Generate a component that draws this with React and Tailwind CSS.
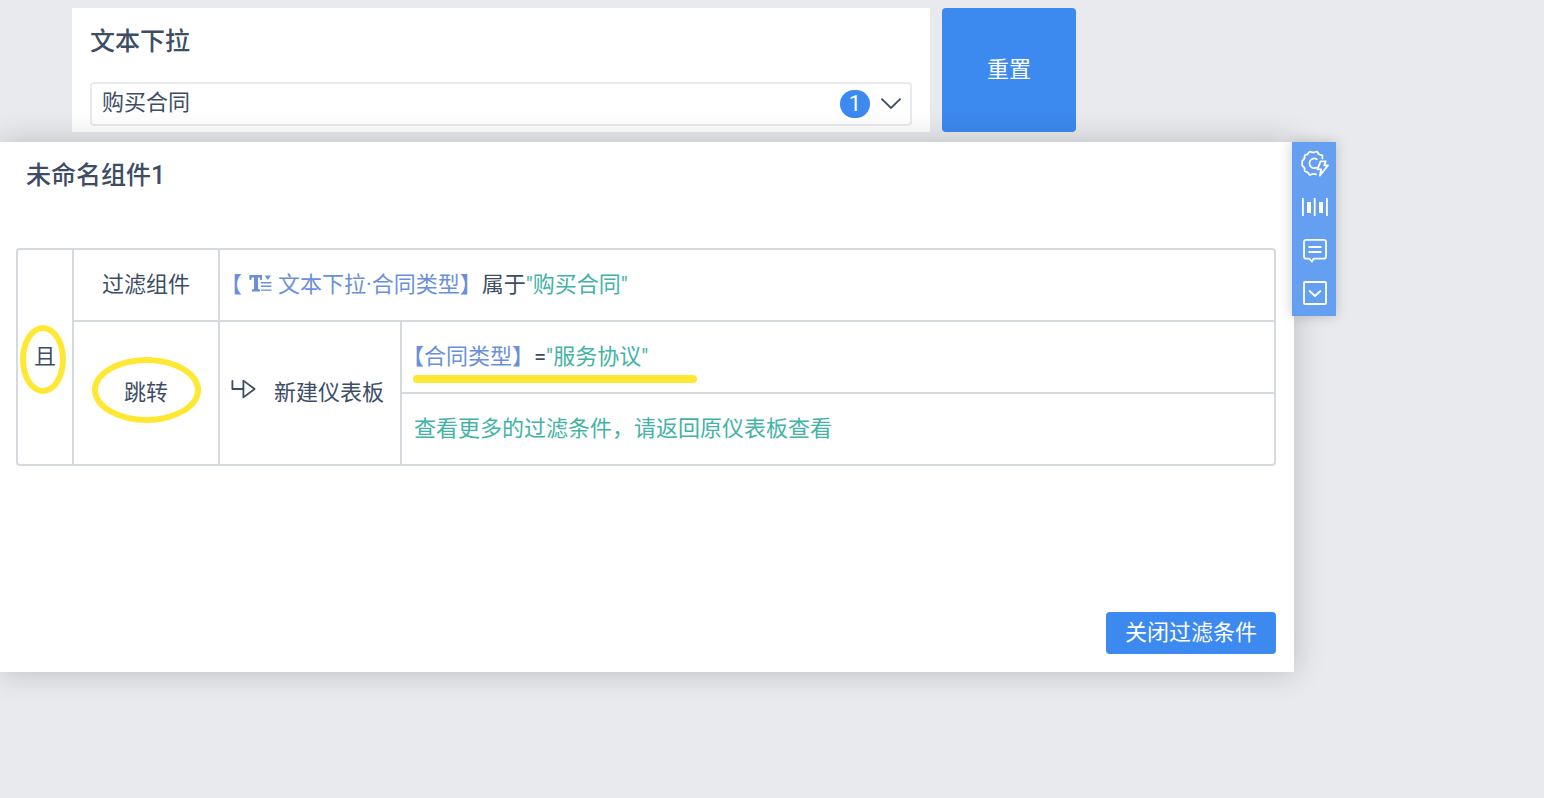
import React, { useState } from "react";

const toolButtons = [
  { name: "联动设置", Icon: GearBoltIcon },
  { name: "图表样式", Icon: BarsIcon },
  { name: "查看备注", Icon: CommentIcon },
  { name: "更多操作", Icon: BoxDownIcon },
];

function GearBoltIcon() {
  return (
    <svg className="w-7 h-7" viewBox="0 0 28 28" fill="none" stroke="currentColor" strokeWidth="1.8" strokeLinecap="round" strokeLinejoin="round">
      <path d="M21.4 8.4V5.8Q21.2 4.8 20 4.8Q17.6 4.8 16.8 2.6Q16.2 1.2 14.8 1.8Q12.2 3.2 9.8 1.8Q8.4 1.2 7.8 2.6Q7 4.6 4.6 4.8Q3.4 5 3.6 6.4Q4 8.8 2 10Q1 10.6 1.2 12V14.4Q1 15.8 2 16.4Q4 17.6 3.6 20Q3.4 21.4 4.6 21.6Q7 21.8 7.8 24Q8.4 25.2 9.8 24.6Q12.4 23.2 15 24.4" />
      <path d="M15.8 9.2A4.8 4.8 0 1 0 15.2 17.6" />
      <path d="M19.6 11.4H24.8L23.2 15.4H27L18.8 25.6L20.2 19.4H16.4Z" />
    </svg>
  );
}

function BarsIcon() {
  return (
    <svg className="w-7 h-7" viewBox="0 0 28 28" fill="currentColor">
      <rect x="1" y="5" width="1.8" height="18" />
      <rect x="6" y="9" width="4" height="11" />
      <rect x="12.8" y="5" width="1.8" height="18" />
      <rect x="18" y="9" width="4" height="11" />
      <rect x="25" y="5" width="1.8" height="18" />
    </svg>
  );
}

function CommentIcon() {
  return (
    <svg className="w-7 h-7" viewBox="0 0 28 28" fill="none" stroke="currentColor" strokeWidth="1.8" strokeLinecap="round" strokeLinejoin="round">
      <path d="M5.2 3.8H22.8Q25 3.8 25 6V20.4Q25 22.6 22.8 22.6H12.6L11 25.6L8.2 22.6H5.2Q3 22.6 3 20.4V6Q3 3.8 5.2 3.8Z" />
      <path d="M8.2 11H19.8M8.2 16H19.8" />
    </svg>
  );
}

function BoxDownIcon() {
  return (
    <svg className="w-7 h-7" viewBox="0 0 28 28" fill="none" stroke="currentColor" strokeWidth="1.8" strokeLinecap="round" strokeLinejoin="round">
      <rect x="3" y="3" width="22" height="22" rx="1" />
      <path d="M8.6 12L14 17L19.4 12" />
    </svg>
  );
}

function TextFieldIcon() {
  return (
    <svg className="inline-block w-6 h-6 mx-1.5 mb-1 align-middle" viewBox="0 0 24 24" fill="currentColor">
      <path d="M1.4 3H14V8H12.4L11.6 5.6H10V17L12 17.6V19.4H4V17.6L6 17V5.6H4L3 8H1.4Z" />
      <path d="M16.6 3.4H23L19.8 8Z" />
      <path d="M13 10H23.4V11.4H13ZM13 13.6H23.4V15H13ZM13 17.4H23.4V18.8H13Z" />
    </svg>
  );
}

function JumpIcon() {
  return (
    <svg className="w-[26px] h-6 mr-[18px] mb-2" viewBox="0 0 26 24" fill="none" stroke="currentColor" strokeWidth="1.8" strokeLinecap="round" strokeLinejoin="round">
      <path d="M2.4 4V12H13.4" />
      <path d="M13.4 3.6V20.4L24.6 12Z" />
    </svg>
  );
}

function App() {
  const [contract, setContract] = useState("购买合同");

  return (
    <div className="min-h-screen bg-[#e8eaed] text-[#3d4d66] text-[22px] leading-8 font-normal font-[Roboto,'Noto_Sans_CJK_SC',sans-serif]">
      {/* Filter bar */}
      <div className="flex gap-3 pt-2 pl-[72px] pr-[468px]">
        <div className="flex-1 bg-white px-[18px] pt-4 pb-1.5">
          <label htmlFor="contract" className="block text-[25px] leading-9 font-medium mb-[22px]">文本下拉</label>
          <div className="relative">
            <select
              id="contract"
              value={contract}
              onChange={(e) => setContract(e.target.value)}
              className="block appearance-none w-full h-11 border-2 border-[#e8eaed] rounded pl-2.5 pr-20 pb-0.5 bg-white"
            >
              <option>购买合同</option>
              <option>服务协议</option>
            </select>
            <div className="absolute inset-y-0 right-2.5 flex items-center gap-2.5 pointer-events-none">
              <span className="w-[30px] h-7 rounded-full bg-[#3c89ef] text-white leading-7 text-center">1</span>
              <svg className="w-[22px] h-4" viewBox="0 0 22 16" fill="none" stroke="currentColor" strokeWidth="1.8">
                <path d="M1.4 2.6L11 12L20.6 2.6" />
              </svg>
            </div>
          </div>
        </div>
        <button className="w-[134px] rounded bg-[#3c89ef] text-white">重置</button>
      </div>

      {/* Component panel */}
      <div className="relative flex items-start mt-2.5 pr-[208px]">
        <section className="flex-1 flex flex-col min-h-[530px] bg-white pt-4 pl-4 pr-[18px] pb-[18px] shadow-[0_0_30px_rgba(0,0,0,0.2)]">
          <h2 className="pl-2.5 mb-[54px] text-[25px] leading-9 font-medium">未命名组件1</h2>

          <div className="border-2 border-[#d5dade] rounded">
            <table className="w-full table-fixed border-separate border-spacing-0">
              <colgroup>
                <col className="w-14" />
                <col className="w-[146px]" />
                <col className="w-[182px]" />
                <col />
              </colgroup>
              <tbody>
                <tr className="h-[72px]">
                  <td rowSpan={3} className="relative border-r-2 border-[#d5dade] text-center">
                    且
                    <span className="absolute left-0.5 top-[75px] w-[46px] h-[69px] rounded-[50%] border-[6px] border-[#ffe833]" />
                  </td>
                  <td className="border-r-2 border-b-2 border-[#d5dade] text-center">过滤组件</td>
                  <td colSpan={2} className="border-b-2 border-[#d5dade]">
                    <span className="text-[#6a90da]">【<TextFieldIcon />文本下拉·合同类型】</span>
                    属于
                    <span className="text-[#42b3a5]">"购买合同"</span>
                  </td>
                </tr>
                <tr className="h-[72px]">
                  <td rowSpan={2} className="relative border-r-2 border-[#d5dade] text-center">
                    跳转
                    <span className="absolute left-[18px] top-[35px] w-[109px] h-[66px] rounded-[50%] border-[6px] border-[#ffe833]" />
                  </td>
                  <td rowSpan={2} className="border-r-2 border-[#d5dade]">
                    <div className="flex items-center pl-2.5 whitespace-nowrap">
                      <JumpIcon />
                      新建仪表板
                    </div>
                  </td>
                  <td className="relative border-b-2 border-[#d5dade]">
                    <span className="text-[#6a90da]">【合同类型】</span>
                    =
                    <span className="text-[#42b3a5]">"服务协议"</span>
                    <span className="absolute left-[11px] top-[53px] w-[284px] h-2 rounded-full bg-[#ffe833]" />
                  </td>
                </tr>
                <tr className="h-[70px]">
                  <td className="pl-3 text-[#42b3a5]">查看更多的过滤条件，请返回原仪表板查看</td>
                </tr>
              </tbody>
            </table>
          </div>

          <button className="self-end mt-auto w-[170px] h-[42px] rounded bg-[#3c89ef] text-white">关闭过滤条件</button>
        </section>

        <div className="relative flex flex-col w-11 -ml-0.5 pb-0.5 bg-[#649ff2] text-white shadow-[0_0_12px_rgba(0,0,0,0.2)]">
          {toolButtons.map(({ name, Icon }) => (
            <button key={name} aria-label={name} className="flex items-center justify-center h-[43px] pl-0.5">
              <Icon />
            </button>
          ))}
        </div>
      </div>
    </div>
  );
}

export default App;
